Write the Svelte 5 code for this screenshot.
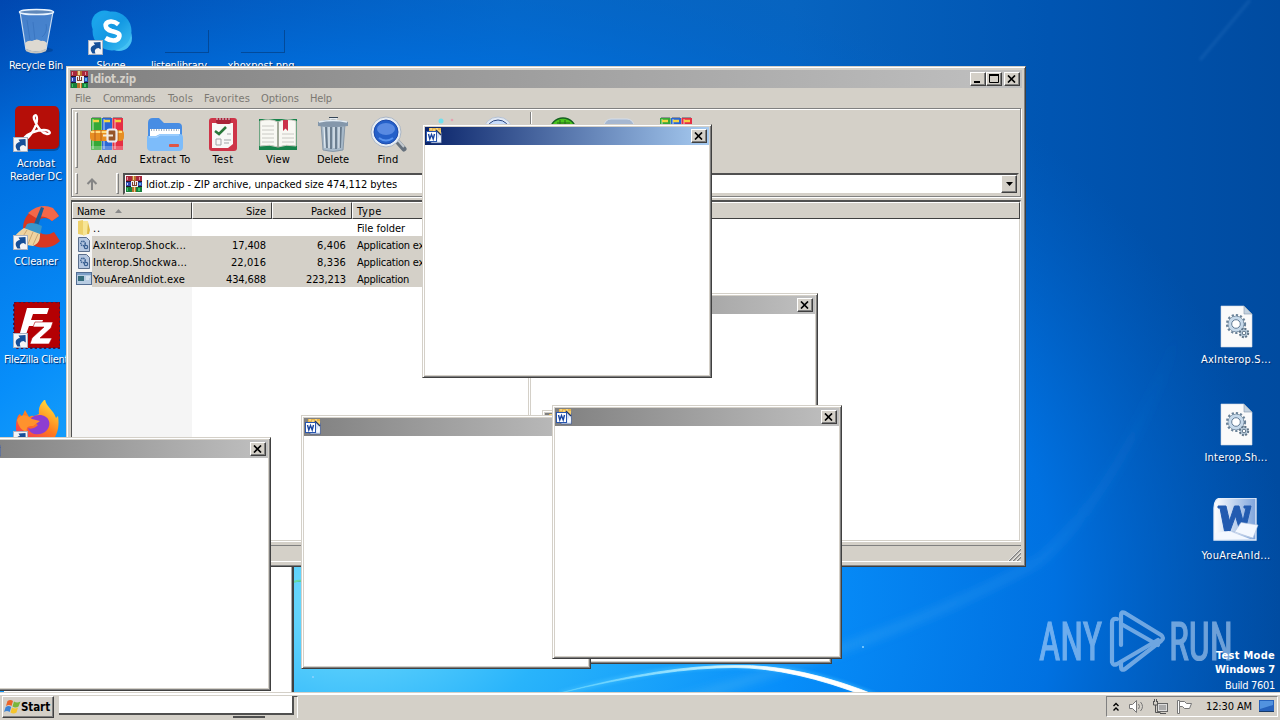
<script>
  function fit(node, width) {
    const natural = node.getBoundingClientRect().width;
    const n = node.textContent.length;
    node.style.letterSpacing = (width - natural) / n + 'px';
  }
  const desktop = [
    { x: 36, y: 8, icon: 'bin', lines: [['Recycle Bin', 54]] },
    { x: 111, y: 8, icon: 'skype', lines: [['Skype', 29]], link: [88, 40] },
    { x: 179, y: 8, icon: 'blank', shift: 6, lines: [['listenlibrary', 56]] },
    { x: 261, y: 8, icon: 'blank', lines: [['xboxpost.png', 67]] },
    { x: 36, y: 106, icon: 'acrobat', lines: [['Acrobat', 38], ['Reader DC', 52]], link: [13, 137] },
    { x: 36, y: 204, icon: 'cc', lines: [['CCleaner', 44]], link: [13, 235] },
    { x: 36, y: 302, icon: 'fz', lines: [['FileZilla Client', 64]], link: [13, 333] },
    { x: 36, y: 400, icon: 'fox', lines: [['Firefox', 34]], link: [13, 431] },
    { x: 1236, y: 302, icon: 'dll', lines: [['AxInterop.S...', 70]] },
    { x: 1236, y: 400, icon: 'dll', lines: [['Interop.Sh...', 63]] },
    { x: 1236, y: 498, icon: 'word', lines: [['YouAreAnId...', 69]] }
  ];
  const menu = [['File', 16, 28], ['Commands', 52, 65], ['Tools', 25, 36], ['Favorites', 46, 57], ['Options', 38, 49], ['Help', 22, 32]];
  const tools = [
    ['Add', 20, 56], ['Extract To', 51, 60], ['Test', 21, 56], ['View', 24, 54], ['Delete', 32, 56], ['Find', 21, 54],
    ['Wizard', 35, 58], ['Info', 20, 52], ['|', 0, 12], ['VirusScan', 48, 54], ['Comment', 46, 58], ['SFX', 20, 54]
  ];
  const rows = [
    { icon: 'folder', name: ['..', 8], type: ['File folder', 48] },
    { icon: 'lib', name: ['AxInterop.Shock...', 93], size: ['17,408', 34], packed: ['6,406', 29], type: ['Application extension', 102], sel: true },
    { icon: 'lib', name: ['Interop.Shockwa...', 94], size: ['22,016', 35], packed: ['8,336', 29], type: ['Application extension', 102], sel: true },
    { icon: 'exe', name: ['YouAreAnIdiot.exe', 92], size: ['434,688', 40], packed: ['223,213', 40], type: ['Application', 52], sel: true }
  ];
  const popups = [
    { x: 528, y: 293 }, { x: 542, y: 410 }, { x: 301, y: 415 }, { x: 552, y: 405 },
    { x: -19, y: 437 }, { x: 422, y: 124, active: true }
  ];
</script>

{#snippet rar(s)}
  <svg width={s} height={s} viewBox="0 0 16 16" shape-rendering="crispEdges">
    <rect width="16" height="5" y="0" fill="#a8283c"/><rect width="16" height="5" y="5.5" fill="#3048b0"/><rect width="16" height="5" y="11" fill="#18803c"/>
    <path d="M0 5.2h16M0 10.6h16" stroke="#201828"/>
    <path d="M1 1h1v3H1zM13 1h1v3h-1z" fill="#e890a0"/><path d="M1 7h1v2H1z" fill="#c8d0ff"/><path d="M13 7h2v2h-2z" fill="#58b8e8"/><path d="M1 12h1v3H1zM12 12h2v3h-2z" fill="#40c868"/>
    <rect x="6" width="4" height="16" fill="#b8722c"/><path d="M7.500 0v4M8.500 11v5" stroke="#ead090"/>
    <rect x="5" y="5" width="7" height="6" fill="#eee"/><path d="M6 6v3h4V6M8 5v4" stroke="#804030" fill="none"/>
  </svg>
{/snippet}

{#snippet smallword()}
  <svg width="16" height="16" viewBox="0 0 16 16">
    <path d="M4 1h9l2.500 4v10H5z" fill="#d5e2f8" stroke="#43598c" stroke-width=".7"/>
    <path d="M3 0h12v3H3z" fill="#e9b54b"/><path d="M4 1h2m1 1h2m1-1h2" stroke="#fff1b2"/>
    <path d="M10 2l5 5V2z" fill="#f5cf70"/><path d="M10 2l5 5" stroke="#23365f" stroke-width="1.2"/>
    <path d="M11 12l3-5 1 5-2 2z" fill="#f7fbff"/>
    <rect x=".5" y="3.500" width="10" height="10" fill="#fff" stroke="#2755ae"/>
    <path d="M2.500 6l1.300 5L5.500 6.500 7.200 11 8.500 6" fill="none" stroke="#1744a0" stroke-width="1.400"/>
  </svg>
{/snippet}

{#snippet closeBtn()}
  <span class="cap"><svg width="9" height="8" viewBox="0 0 9 8"><path d="M1 .5l7 7M8 .5l-7 7" stroke="#000" stroke-width="1.7"/></svg></span>
{/snippet}

{#snippet shortcut()}
  <svg width="15" height="15" viewBox="0 0 15 15"><rect x=".5" y=".5" width="14" height="14" fill="#f4f4f6" stroke="#a9b2c2"/><path d="M4.500 13.500C1 9 3 5.500 7 5L5.500 2.500 12.500 2l.3 7.500L10.500 8C7.500 8.500 6 10 7.500 13.500z" fill="#164f98"/></svg>
{/snippet}

{#snippet gears()}
  <svg width="48" height="48" viewBox="0 0 48 48">
    <path d="M9 4h23l8 8v33H9z" fill="#fafafa" stroke="#d0d8e4" stroke-width=".6"/><path d="M32 4v8h8z" fill="#c3d1de" stroke="#8498ac" stroke-width=".6"/>
    <circle cx="24" cy="22" r="9" fill="none" stroke="#6a8298" stroke-width="2.200" stroke-dasharray="2.200 2"/>
    <circle cx="24" cy="22" r="7.800" fill="none" stroke="#6f879d" stroke-width="1"/>
    <circle cx="24" cy="22" r="6" fill="none" stroke="#c6d9ea" stroke-width="3.200"/><circle cx="24" cy="22" r="4.300" fill="#fff" stroke="#5f7a95" stroke-width="1"/>
    <circle cx="32" cy="31" r="4.200" fill="#bdd0df" stroke="#5e7386" stroke-width="2" stroke-dasharray="1.900 1.400"/><circle cx="32" cy="31" r="1.800" fill="#fff" stroke="#5e7386"/>
  </svg>
{/snippet}

{#snippet deskIcon(k)}
  {#if k === 'bin'}
    <svg width="48" height="48" viewBox="0 0 48 48"><ellipse cx="27" cy="42" rx="14" ry="3" fill="#003273" opacity=".4"/><path d="M8 4l6 38q10 5 20 0l7-38z" fill="#8cb4e0" opacity=".5"/><path d="M8 4l6 38M41 4l-7 38" stroke="#c6daf0" stroke-width="1.200"/><path d="M13 35q3-3 7-2 5-3 9 0 3-1 6 2l-1 6q-9 5-20 0z" fill="#ddd9d1"/><path d="M14 42q10 5 20 0" stroke="#c8c6c0" stroke-width="2" fill="none"/><path d="M34 16q2 8-4 13M15 12l3 20M21 14l2 18" stroke="#2f69b5" opacity=".5" fill="none"/><ellipse cx="24.500" cy="4" rx="17" ry="2.600" fill="#5f88ba" stroke="#e9f4ff" stroke-width="1.500"/></svg>
  {:else if k === 'skype'}
    <svg width="48" height="48" viewBox="0 0 48 48"><defs><linearGradient id="sk" x2="1" y2="1"><stop stop-color="#20a8ef"/><stop offset=".5" stop-color="#1399e3"/><stop offset="1" stop-color="#42c1f3"/></linearGradient></defs><circle cx="17.500" cy="15.500" r="13" fill="#18a4ea"/><circle cx="32" cy="30" r="13" fill="#45c1f2"/><circle cx="25" cy="23" r="19.500" fill="url(#sk)"/><path d="M31.500 16.500q-4-3.500-8-3c-7 1-6 7.500 1 9.500 7 1.500 9 3 7.500 6.500-2 4.500-9 3.500-13.500.5" fill="none" stroke="#fff" stroke-width="4.600"/></svg>
  {:else if k === 'blank'}
    <svg width="48" height="48" viewBox="0 0 48 48"><path d="M4 44.500h44M47.500 22v22" stroke="#03346f" opacity=".55"/></svg>
  {:else if k === 'acrobat'}
    <svg width="48" height="48" viewBox="0 0 48 48"><rect x="4" y="2" width="44" height="43" rx="6" fill="#033369" opacity=".5"/><rect x="3" y="0" width="44" height="43" rx="5" fill="#b50e08"/><path d="M13 34c6-4 12-14 12-21 0-6-4-4-3 0 3 8 8 14 13 15 5 0 3-4-3-4-8 0-16 4-19 7-2 3-1 4 0 3z" fill="none" stroke="#fff" stroke-width="2.300"/></svg>
  {:else if k === 'cc'}
    <svg width="48" height="48" viewBox="0 0 48 48"><path d="M47 12c-6-13-27-12-34 3-7 16 6 32 24 28q6-1 11-6l-6-9c-8 5-16 2-17-5-1-8 8-12 15-6z" fill="#d93721"/><path d="M16 9Q28-2 41 4l6 8-7 5q-9-7-16-3z" fill="#f46849"/><path d="M29 3l3 1-6 18-4-2z" fill="#155f9c"/><path d="M15 20q6-3 15 2l-2 9-16-5z" fill="#3996cb"/><path d="M12 24c-4 3-7 5-9 8 2 6 9 9 18 10 7-3 7-8 7-12z" fill="#efd3a0"/><path d="M15 26l-7 11M21 28l-5 12M26 30l-5 11" stroke="#c19b67" stroke-width=".8"/></svg>
  {:else if k === 'fz'}
    <svg width="48" height="48" viewBox="0 0 48 48"><rect x="2" y="0" width="46" height="46" fill="#b40003"/><rect x="2" y="0" width="46" height="46" fill="none" stroke="#4a1440" stroke-width="2" stroke-dasharray="2.300 2.300"/><path d="M15 6h22l-2 6H21l-2 6h12l-2 6H17l-5 14H6z" fill="#fff"/><path d="M23 20h18l-2 6-11 10h12l-3 6H18l2-6 12-11H21z" fill="#fff" stroke="#b40003" stroke-width=".6"/></svg>
  {:else if k === 'fox'}
    <svg width="48" height="48" viewBox="0 0 48 48"><defs><linearGradient id="ff" x1=".8" x2=".2" y2="1"><stop stop-color="#ffe53b"/><stop offset=".5" stop-color="#ff791e"/><stop offset="1" stop-color="#ef2569"/></linearGradient></defs><path d="M4 28c0-10 2-13 4-14l2 3 3-7 4 7q3-2 5-1l5-2c-1-7 2-11 6-15 1 8 8 10 11 19l2-2c3 19-7 31-21 31C13 47 4 39 4 28z" fill="url(#ff)"/><path d="M15 24q4-10 14-9c8 1 11 9 6 15-6 7-17 5-19-2 4 2 8-1 10-3-5-3-8-2-11-1z" fill="#8d3ed1"/><path d="M5 20c5-8 11-4 15-1l8 2-7 5q-8-1-6 6c-6-2-8-5-10-12" fill="#ff922d"/></svg>
  {:else if k === 'dll'}
    {@render gears()}
  {:else}
    <svg width="48" height="48" viewBox="0 0 48 48"><defs><linearGradient id="wd" x2="1" y2="0"><stop stop-color="#fff"/><stop offset="1" stop-color="#7ea4dc"/></linearGradient></defs><path d="M2 10Q2 0 10 0h34v42H2z" fill="url(#wd)" stroke="#e8effa" stroke-width="1.300"/><path d="M6 8h8l3.500 15L22.500 8H27l4 15 3-13h-2V8h7l-6 25h-5L23.500 18 18 33h-5.500L8 10H6z" fill="#235bb0" stroke="#235bb0" stroke-width="1"/><path d="M29 24.500l17 2.500-5 13-19-5z" fill="#f4f8ff" stroke="#b0c3e0" stroke-width=".6"/><path d="M3 35l14-2 21 8H3z" fill="#f4f8ff"/><path d="M20 33l20 7" stroke="#b0c3e0" stroke-width=".8"/></svg>
  {/if}
{/snippet}

{#snippet toolIcon(k)}
  <svg width="38" height="38" viewBox="0 0 38 38">
    {#if k === 'Add' || k === 'SFX'}
      <path d="M3 3h10.500v32H3z" fill="#35a936"/><path d="M14 3h10v32H14z" fill="#2967d5"/><path d="M24.500 3H35v32H24.500z" fill="#e62e44"/>
      <path d="M5 4v30M16 4v30M27 4v30" stroke="#fff" opacity=".35" stroke-width="2"/>
      <path d="M5 6h6M16 6h6M27 6h6" stroke="#f4d441" stroke-width="2.500"/><path d="M4 2.500h9M15 2.500h8M25 2.500h9" stroke="#2b3148" opacity=".4"/>
      <path d="M3 31h32v4H3z" fill="#fff" opacity=".25"/>
      <rect x="2" y="15" width="34" height="11" rx="4" fill="#e78e22"/><path d="M3 17h31" stroke="#ffda7b" stroke-width="2"/><path d="M7 15v11M13 15v11M30 15v11" stroke="#b9601d"/>
      <rect x="19.500" y="14.500" width="9" height="12" rx="2" fill="#96552a" stroke="#ececf1" stroke-width="2.200"/><path d="M15 20.500h10" stroke="#f3eadb" stroke-width="2"/>
    {:else if k === 'Extract To'}
      <path d="M2 8q0-5 5-5h6l5 5h14q4 0 4 4v10H2z" fill="#478de4"/><path d="M4 14h30v12H4z" fill="#fff"/><path d="M5 15h28" stroke="#8095ad" stroke-dasharray="1 1.500" stroke-width="1.500"/><path d="M1 21h9l4-2h20q3 0 3 4v9q0 4-4 4H5q-4 0-4-4z" fill="#7dbcfa"/><path d="M3 22h8l3-2h19" stroke="#b7dcff" fill="none"/><rect x="23" y="29" width="10" height="3" rx="1" fill="#df5646"/>
    {:else if k === 'Test'}
      <rect x="5" y="3" width="28" height="33" rx="3" fill="#ce3448"/><path d="M8 8h21v21l-5 4H8z" fill="#f8f8f7"/><rect x="12" y="3" width="15" height="6" rx="2" fill="#a92338"/><path d="M13 5V3m3 2V3m3 2V3m3 2V3m3 2V3" stroke="#e9e5ea" fill="none"/><path d="M11 16l4 3 7-7" stroke="#29783b" fill="none" stroke-width="2.500"/><path d="M23 19h4M12 24h5v6h-5zM20 25h7M20 28h5" stroke="#a1a5a8" fill="none"/>
    {:else if k === 'View'}
      <path d="M-2 4h42v31H-2z" fill="#17834b"/><path d="M1 6q10-3 18 1v25q-8-3-18-1zM37 6q-10-3-18 1v25q8-3 18-1z" fill="#f8f8f3" stroke="#c9c9bf"/><path d="M3 11h12M3 15h12M3 19h12M3 23h12M3 27h12M23 19h12M23 23h12M23 27h12" stroke="#c4c4c0" stroke-width=".9"/><path d="M19 7v26" stroke="#75806b"/><path d="M24 5h5v11l-2.500-2.500L24 16z" fill="#cb3149"/>
    {:else if k === 'Delete'}
      <path d="M7 9h24l-2 26q-10 3-20 0z" fill="#a7b9c9" stroke="#8797a7"/><path d="M12 12l1 21M17 12v22M22 12v22M27 12l-1 21" stroke="#67798b" stroke-width="1.800"/><path d="M10 12l1 21M15 12v21M20 12v21M25 12v21" stroke="#eef4f9"/><path d="M4 7q14-5 30 0v4q-15 2-30 0z" fill="#8497ab"/><path d="M5 7q14-3 28 0M16 4q3-2 7 0" fill="none" stroke="#e6eef5" stroke-width="1.700"/><path d="M15 2.500h9" stroke="#354556"/>
    {:else if k === 'Find'}
      <path d="M27 25l8 9" stroke="#66717d" stroke-width="5" stroke-linecap="round"/><path d="M28 24l7 8" stroke="#c2c9d0" stroke-width="2"/><circle cx="17" cy="17" r="15" fill="#e6ecf3" stroke="#abb6c5"/><circle cx="17" cy="17" r="12" fill="#2560c9" stroke="#1d4aab"/><ellipse cx="17" cy="14" rx="9" ry="6" fill="#6f9dec" opacity=".7"/><path d="M10 23q7 5 14 0" stroke="#5892ed" stroke-width="2" fill="none"/>
    {:else if k === 'Wizard'}
      <circle cx="16" cy="6" r="2.500" fill="#71e0ef"/><circle cx="27" cy="5" r="1.300" fill="#e5a2b0"/><path d="M19 14l9 20" stroke="#3e5070" stroke-width="4"/>
    {:else if k === 'Info'}
      <circle cx="18" cy="17" r="15" fill="#e0e8f5" stroke="#b7c3d4"/><circle cx="18" cy="17" r="12" fill="#c7dcfb" stroke="#2b4780"/>
    {:else if k === 'VirusScan'}
      <circle cx="18" cy="16" r="13" fill="#4bc41f" stroke="#166222" stroke-width="1.500"/><path d="M12 8h13M15 5v5m5-5v5" stroke="#246b1a"/>
    {:else}
      <rect x="3" y="4" width="30" height="20" rx="7" fill="#a6b7d0" stroke="#d4dfec"/>
    {/if}
  </svg>
{/snippet}

<div class="screen">
  <svg class="wall" width="1280" height="720" viewBox="0 0 1280 720">
    <defs>
      <linearGradient id="base" x2="1" y2="0"><stop stop-color="#0042ab"/><stop offset=".4" stop-color="#0766c3"/><stop offset=".62" stop-color="#0764c0"/><stop offset=".82" stop-color="#0055b2"/><stop offset="1" stop-color="#004ba0"/></linearGradient>
      <radialGradient id="glow" gradientUnits="userSpaceOnUse" cx="350" cy="600" r="940" gradientTransform="translate(0 165) scale(1 .72)"><stop stop-color="#79e0fb"/><stop offset=".22" stop-color="#29b4fb"/><stop offset=".48" stop-color="#078efa"/><stop offset=".75" stop-color="#0074e6" stop-opacity=".9"/><stop offset="1" stop-color="#0062c8" stop-opacity="0"/></radialGradient>
      <linearGradient id="arc"><stop stop-color="#69d8ff" stop-opacity=".5"/><stop offset=".5" stop-color="#c4f1ff"/><stop offset=".7" stop-color="#fff"/><stop offset="1" stop-color="#fff"/></linearGradient>
      <linearGradient id="ray" gradientUnits="userSpaceOnUse" x1="640" y1="700" x2="1180" y2="330"><stop stop-color="#55bbf2" stop-opacity=".4"/><stop offset=".6" stop-color="#3aa0f0" stop-opacity=".25"/><stop offset="1" stop-color="#2080e0" stop-opacity="0"/></linearGradient>
      <filter id="soft" x="-20%" y="-20%" width="140%" height="140%"><feGaussianBlur stdDeviation="4"/></filter><filter id="s2" x="-20%" y="-50%" width="140%" height="200%"><feGaussianBlur stdDeviation="1.5"/></filter>
    </defs>
    <rect width="1280" height="720" fill="url(#base)"/><rect width="1280" height="720" fill="url(#glow)"/>
    <path d="M640 712Q900 640 1040 560Q1120 490 1180 330" fill="none" stroke="url(#ray)" stroke-width="9" filter="url(#soft)"/>
    <path d="M560 694Q660 665 735 666Q800 665 880 698" fill="none" stroke="#42bfff" stroke-width="6" opacity=".5" filter="url(#s2)"/>
    <path d="M560 693Q665 665 735 665.500Q800 664 880 697L868 697Q794 668 735 667.500Q665 667.500 560 693z" fill="url(#arc)" stroke="url(#arc)" stroke-width=".8"/>
    <path d="M294 582q4-2 9-1" stroke="#64d9a5" stroke-width="2"/>
    <path d="M1200 60L1250 0" stroke="#5fa0e0" stroke-width="3" opacity=".15" filter="url(#s2)"/>
    <g fill="#8ed3ff"><circle cx="863" cy="647" r="1"/><circle cx="313" cy="677" r="1"/></g>
  </svg>

  {#each desktop as d}
    <div class="desk" style="left:{d.x - 50}px;top:{d.y}px">
      <div class="pic" style="transform:translateX({d.shift ?? 0}px)">{@render deskIcon(d.icon)}</div>
      {#each d.lines as [t, w]}<div class="lbl"><span use:fit={w}>{t}</span></div>{/each}
    </div>
    {#if d.link}<div class="link" style="left:{d.link[0]}px;top:{d.link[1]}px">{@render shortcut()}</div>{/if}
  {/each}

  <svg class="mark" width="200" height="66" viewBox="1035 607 200 66">
    <g opacity=".5"><g fill="#dcecff" font-family="Roboto" font-weight="400" font-size="53" stroke="#dcecff" stroke-width="1.200">
      <text x="1039" y="660" textLength="63" lengthAdjust="spacingAndGlyphs">ANY</text><text x="1169" y="660" textLength="64" lengthAdjust="spacingAndGlyphs">RUN</text></g>
      <g fill="none" stroke="#dcecff" stroke-width="4.200" stroke-linejoin="round" stroke-linecap="round"><path d="M1117 619q-5-1-5 4v39q1 4 5 2l41-24"/><path d="M1121 645v-30q0-4 4-2l36 22q4 3 0 6l-36 28q-4 2-4-2v-5"/><path d="M1123 625l35 20"/></g></g>
  </svg>
  <div class="build"><b><span use:fit={59}>Test Mode</span></b><b><span use:fit={60}>Windows 7</span></b><i><span use:fit={50}>Build 7601</span></i></div>

  <div class="back"></div>

  <main class="rar frame">
    <header class="title"><span class="ticon">{@render rar(17)}</span><b use:fit={46}>Idiot.zip</b><span class="grow"></span>
      <span class="cap"><svg width="9" height="8"><path d="M1 7h6" stroke="#000" stroke-width="2"/></svg></span>
      <span class="cap gap"><svg width="10" height="9"><path d="M.5 0v8.500h9V0" fill="none" stroke="#000"/><path d="M0 1h10" stroke="#000" stroke-width="2"/></svg></span>{@render closeBtn()}</header>
    <nav>{#each menu as [t, w, c]}<span style="width:{c}px"><span use:fit={w}>{t}</span></span>{/each}</nav>
    <section class="rebar">
      <div class="tools"><i class="grip"></i>
        {#each tools as [t, w, c]}
          {#if t === '|'}<i class="sep"></i>{:else}<div class="tool" style="width:{c}px">{@render toolIcon(t)}<span class="tl"><span use:fit={w}>{t}</span></span></div>{/if}
        {/each}
      </div>
      <div class="address"><i class="grip"></i><span class="up"><svg width="14" height="14" viewBox="0 0 14 14"><path d="M7 13V2M2.500 7L7 2.500 11.500 7" fill="none" stroke="#858585" stroke-width="2"/></svg></span><i class="grip second"></i>
        <div class="combo">{@render rar(16)}<span class="ct"><span use:fit={251}>Idiot.zip - ZIP archive, unpacked size 474,112 bytes</span></span><span class="drop"><svg width="7" height="4"><path d="M0 0h7L3.500 4z"/></svg></span></div>
      </div>
    </section>
    <section class="list">
      <div class="row head"><div class="c1"><span use:fit={28}>Name</span><svg width="7" height="4"><path d="M3.500 0L7 4H0z" fill="#8a8a8a"/></svg></div><div class="c2"><span use:fit={20}>Size</span></div><div class="c3"><span use:fit={35}>Packed</span></div><div class="c4"><span use:fit={25}>Type</span></div><div class="c5"></div></div>
      {#each rows as r}
        <div class="row" class:sel={r.sel}>
          <div class="c1"><span class="fi">
            {#if r.icon === 'folder'}<svg width="16" height="16" viewBox="0 0 16 16"><path d="M2 1l5-1v15l-5-1z" fill="#eed16b"/><path d="M7 1h5v13l-5 2z" fill="#f7e596"/><path d="M12 2l2 8-1 4h-2" fill="#dfba48"/></svg>
            {:else if r.icon === 'lib'}<svg width="16" height="16" viewBox="0 0 16 16"><path d="M2.500.5h8l3 3v11h-11z" fill="#b4c6e0" stroke="#5b6f8d"/><circle cx="7" cy="6.500" r="2.200" fill="none" stroke="#395f91" stroke-width="1.500" stroke-dasharray="1.300 .6"/><circle cx="10" cy="10" r="1.700" fill="none" stroke="#395f91" stroke-width="1.200"/></svg>
            {:else}<svg width="16" height="16" viewBox="0 0 16 16"><rect x=".5" y="1.500" width="15" height="12" fill="#b8cce2" stroke="#536d92"/><path d="M1 3h14" stroke="#7d9fc7" stroke-width="2"/><rect x="2" y="5" width="6" height="5" fill="#356c7b"/><path d="M10 6h4M10 8h3" stroke="#f2f6fa"/></svg>{/if}
          </span><span use:fit={r.name[1]}>{r.name[0]}</span></div>
          <div class="c2">{#if r.size}<span use:fit={r.size[1]}>{r.size[0]}</span>{/if}</div>
          <div class="c3">{#if r.packed}<span use:fit={r.packed[1]}>{r.packed[0]}</span>{/if}</div>
          <div class="c4"><span use:fit={r.type[1]}>{r.type[0]}</span></div>
        </div>
      {/each}
      <div class="rest"></div>
    </section>
    <footer><svg width="13" height="13"><path d="M1 13L13 1M5 13l8-8M9 13l4-4" stroke="#808080" stroke-width="1.500"/><path d="M0 13L13 0M4 13l9-9M8 13l5-5" stroke="#fff" stroke-width=".7"/></svg></footer>
  </main>

  {#each popups as p}
    <div class="popup frame" style="left:{p.x}px;top:{p.y}px">
      <div class="title" class:active={p.active}><span class="wicon">{@render smallword()}</span><span class="grow"></span>{@render closeBtn()}</div>
      <div class="blank"></div>
    </div>
  {/each}

  <div class="taskbar">
    <div class="start"><svg width="17" height="16" viewBox="0 0 17 16"><path d="M3.500 2q3-2 5.500 0L7.500 7Q5 5 2 7z" fill="#ec6428"/><path d="M10 2.500q3 2 6.500 0l-2 5q-3 2-6 0z" fill="#79b63b"/><path d="M1.700 8q3-2 5.500 0l-1.500 5Q3 11 0 13z" fill="#3c83d5"/><path d="M8 8.500q3 2 6 0L12.500 13.500q-3 2-6 0z" fill="#f5c52d"/></svg><b use:fit={29}>Start</b></div>
    <div class="task"></div>
    <i class="nub"></i>
    <span class="grow"></span>
    <div class="tray">
      <svg width="9" height="12"><path d="M1.500 5l2.500-2.500L6.500 5M1.500 9.500L4 7l2.500 2.500" fill="none" stroke="#000" stroke-width="1.400"/></svg>
      <svg width="17" height="16"><path d="M1.500 5.500h3l4-4v12l-4-4h-3z" fill="#fff" stroke="#777"/><path d="M10.500 5q2 2.500 0 5M12.500 3q4 4.500 0 9" fill="none" stroke="#777"/></svg>
      <svg width="17" height="16"><rect x="5.500" y="4.500" width="10" height="8" fill="#ddd" stroke="#666"/><path d="M7 6h7v5H7z" fill="#aaa"/><path d="M8 14.500h6M1.500 2v4h4V2M3.500 6v7.500h5M2.500 0v3m2-3v3" fill="none" stroke="#555"/></svg>
      <svg width="17" height="16"><path d="M1.500 1.500h2v13h-2z" fill="#fff" stroke="#777"/><path d="M3.500 2.500h5l2 2h5l-2 5h-5l-2-2h-3z" fill="#fff" stroke="#777"/></svg>
      <span class="clock"><span use:fit={46}>12:30 AM</span></span>
      <svg width="15" height="13"><rect width="15" height="11" fill="#2662bc"/><path d="M1 1h13v4L1 9z" fill="#5292df"/><path d="M0 11.500h15" stroke="#163a69"/></svg>
    </div>
  </div>
  <div class="task-end"></div>
</div>

<style>
  :global(body) { margin: 0; overflow: hidden; }
  * { box-sizing: border-box; }
  .screen { position: relative; width: 1280px; height: 720px; overflow: hidden; font: 11px/13px "DejaVu Sans Condensed", "DejaVu Sans", sans-serif; font-stretch: condensed; color: #000; background: #0764c0; }
  svg { display: block; flex: none; }
  span, b { white-space: pre; }
  .wall { position: absolute; inset: 0; }
  .desk { position: absolute; width: 100px; display: flex; flex-direction: column; align-items: center; color: #fff; text-shadow: 1px 1px 1px #002a68; }
  .pic { height: 51px; }
  .lbl { height: 13px; }
  .link { position: absolute; }
  .mark { position: absolute; left: 1035px; top: 607px; }
  .build { position: absolute; right: 5px; top: 649px; display: flex; flex-direction: column; align-items: flex-end; color: #fff; line-height: 14px; }
  .build i { font-style: normal; margin-top: 2px; }
  .back { position: absolute; left: 4px; top: 461px; width: 290px; height: 254px; background: #fff; border-right: 2px solid #404040; box-shadow: inset -1px 0 #aaa; }
  .frame { position: absolute; background: #d4d0c8; border: 1px solid; border-color: #d4d0c8 #404040 #404040 #d4d0c8; box-shadow: inset 1px 1px #fff, inset -1px -1px #808080; display: flex; flex-direction: column; }
  .rar.frame { left: 66px; top: 66px; width: 960px; height: 501px; padding: 3px; }
  .title { height: 18px; display: flex; align-items: center; background: linear-gradient(90deg, #808080, #c0c0c0); color: #d4d0c8; padding-right: 2px; flex: none; }
  .title b { font-size: 11.5px; }
  .ticon { width: 20px; padding-left: 1px; }
  .wicon { padding-left: 1px; }
  .grow { flex: 1; }
  .cap { width: 16px; height: 14px; display: flex; align-items: center; justify-content: center; background: #d4d0c8; border: 1px solid; border-color: #fff #404040 #404040 #fff; box-shadow: inset -1px -1px #808080; padding: 0 1px 1px 0; }
  .gap { margin-right: 2px; }
  nav { height: 20px; display: flex; align-items: center; padding-left: 5px; color: #7b7872; flex: none; }
  .rebar { height: 89px; margin: 0 1px; border: 1px solid #808080; box-shadow: inset 1px 1px #fff, 1px 1px #fff; flex: none; }
  .tools { height: 63px; display: flex; padding: 3px 0 0 3px; align-items: flex-start; }
  .grip { width: 3px; height: 56px; border: 1px solid; border-color: #fff #808080 #808080 #fff; flex: none; margin-right: 1px; }
  .tool { display: flex; flex-direction: column; align-items: center; padding-top: 3px; flex: none; }
  .sep { width: 2px; height: 56px; margin: 0 5px; border-left: 1px solid #808080; border-right: 1px solid #fff; flex: none; }
  .address { height: 24px; display: flex; padding-left: 3px; }
  .address .grip { height: 21px; margin: 1px 0 0; }
  .up { width: 38px; padding: 5px 0 0 7px; }
  .address .second { margin-right: 4px; }
  .combo { flex: 1; height: 22px; margin: 1px 1px 0 0; display: flex; align-items: center; background: #fff; border: 2px solid; border-color: #505050 #d4d0c8 #d4d0c8 #505050; padding-left: 1px; }
  .ct { flex: 1; padding: 1px 0 0 4px; }
  .drop { width: 16px; height: 18px; display: flex; align-items: center; justify-content: center; background: #d4d0c8; border: 1px solid; border-color: #fff #404040 #404040 #fff; box-shadow: inset -1px -1px #808080; }
  .list { flex: 1; margin: 3px 1px 0; border: 1px solid #404040; border-color: #505050 #fff #fff #505050; border-top-width: 2px; background: #fff; display: flex; flex-direction: column; box-shadow: inset -1px -1px #d4d0c8; }
  .row { height: 17px; display: flex; flex: none; }
  .row > div { display: flex; align-items: center; height: 100%; flex: none; }
  .row .c1 { width: 120px; padding-left: 4px; background: #f5f5f5; }
  .row .c2, .row .c3 { width: 80px; justify-content: flex-end; padding-right: 6px; }
  .row .c4 { width: 160px; padding-left: 5px; }
  .row .c5 { flex: 1; }
  .row > div { padding-top: 1px; }
  .fi { width: 17px; margin-top: -1px; }
  .row.sel { width: 440px; background: #d4d0c8; }
  .row.sel .c1 { background: linear-gradient(90deg, #f5f5f5 20px, #d4d0c8 20px); }
  .head > div, .row.head .c1 { background: #d4d0c8; border: 1px solid; border-color: #fff #404040 #404040 #fff; }
  .row.head .c2, .row.head .c3 { padding-right: 5px; }
  .row.head .c4 { padding-left: 4px; }
  .head .c1 svg { margin-left: 10px; }
  .rest { width: 120px; flex: 1; background: #f5f5f5; }
  footer { height: 17px; margin: 3px 1px 1px; border-top: 1px solid #808080; border-bottom: 1px solid #fff; display: flex; justify-content: flex-end; align-items: flex-end; flex: none; }
  .popup { width: 290px; height: 254px; padding: 2px; }
  .title.active { background: linear-gradient(90deg, #0a246a, #a6caf0); }
  .blank { background: #fff; flex: 1; }
  .taskbar { position: absolute; left: 0; top: 692px; width: 1280px; height: 28px; background: #d4d0c8; border-top: 1px solid #d4d0c8; box-shadow: inset 0 2px #fff; display: flex; padding: 3px 2px 2px; }
  .start { width: 52px; height: 22px; border: 1px solid; border-color: #fff #404040 #404040 #fff; box-shadow: inset -1px -1px #808080; display: flex; align-items: center; padding-left: 1px; }
  .start b { font-size: 11.5px; }
  .task { width: 235px; height: 19px; margin-left: 5px; background: #fff; border-right: 2px solid #505050; border-bottom: 2px solid #505050; }
  .nub { width: 4px; height: 22px; border-right: 1px solid #fff; border-top: 1px solid #505050; }
  .task-end { position: absolute; left: 233px; top: 716px; width: 32px; height: 2px; background: #505050; }
  .tray { width: 172px; height: 21px; border: 1px solid; border-color: #808080 #fff #fff #808080; display: flex; align-items: center; gap: 7px; padding-left: 5px; }
  .clock { margin-left: 6px; }
</style>
